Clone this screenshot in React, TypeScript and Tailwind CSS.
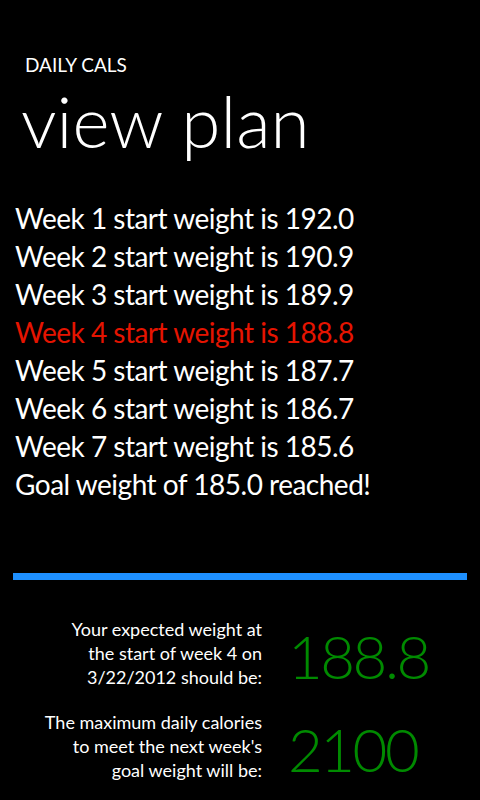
const weeks = [
  { n: 1, w: "192.0" },
  { n: 2, w: "190.9" },
  { n: 3, w: "189.9" },
  { n: 4, w: "188.8", current: true },
  { n: 5, w: "187.7" },
  { n: 6, w: "186.7" },
  { n: 7, w: "185.6" },
];

const font = "font-['Lato','Open_Sans',sans-serif]";

const StatRow = ({ lines, value }: { lines: string[]; value: string }) => (
  <div className="flex items-start">
    <div className="w-[262px] text-right text-[18px] leading-[24px] text-white">
      {lines.map((l) => (
        <div key={l}>{l}</div>
      ))}
    </div>
    <div className="pl-[26px] pt-[9px] text-[60px] leading-none tracking-[-2.5px] text-[#008a00] font-light">
      {value}
    </div>
  </div>
);

export default function App() {
  return (
    <div className={`w-[480px] h-[800px] bg-black text-white overflow-hidden ${font}`}>
      <div className="pl-[25px] pt-[53px] text-[19px] leading-[24px]">DAILY CALS</div>
      <div className="pl-[21px] mt-[4px] text-[71px] leading-[80px] font-light">view plan</div>

      <div className="pl-[15px] mt-[38px] text-[28px] leading-[38px] tracking-[-0.5px]">
        {weeks.map((w) => (
          <div key={w.n} className={w.current ? "text-[#e51400]" : "text-white"}>
            Week {w.n} start weight is {w.w}
          </div>
        ))}
        <div>Goal weight of 185.0 reached!</div>
      </div>

      <div className="mx-[13px] mt-[70px] h-[7px] bg-[#1e90ff]" />

      <div className="mt-[37px] flex flex-col gap-[21px]">
        <StatRow
          lines={["Your expected weight at", "the start of week 4 on", "3/22/2012 should be:"]}
          value="188.8"
        />
        <StatRow
          lines={["The maximum daily calories", "to meet the next week's", "goal weight will be:"]}
          value="2100"
        />
      </div>
    </div>
  );
}
